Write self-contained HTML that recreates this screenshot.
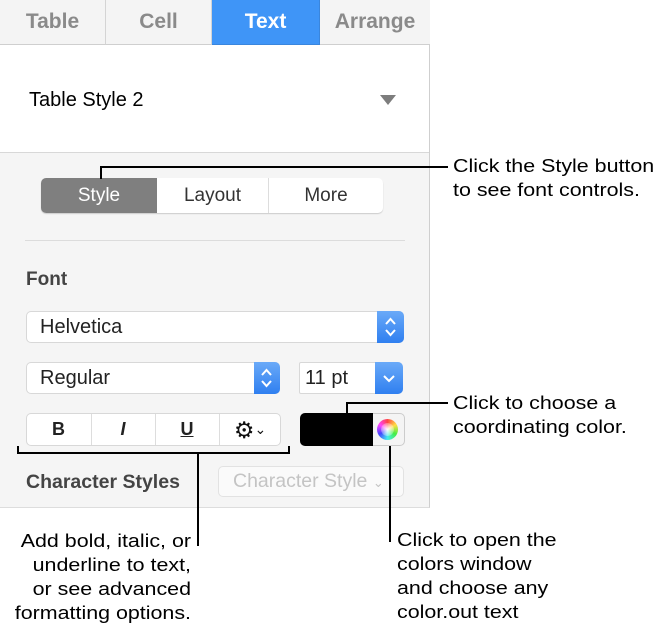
<!DOCTYPE html>
<html><head><style>
*{margin:0;padding:0;box-sizing:border-box}
body{width:662px;height:634px;background:#fff;position:relative;overflow:hidden;font-family:"Liberation Sans",Helvetica,sans-serif}
.a{position:absolute}
.panel{left:0;top:0;width:430px;height:508px;background:#f5f5f5;border-right:1px solid #cfcfcf;border-bottom:1px solid #ddd}
.tab{top:0;height:45px;border-right:1px solid #d4d4d4;border-bottom:1px solid #cfcfcf;color:#8a8a8a;font-weight:bold;font-size:21px;text-align:center;line-height:44px;background:#f4f4f4}
.ctl{background:#fff;border:1px solid #d8d8d8;border-radius:5px;font-size:20px;color:#222}
.blue{background:linear-gradient(#6aaaf8,#2f7ff0);border-radius:0 5px 5px 0}
.cap{font-size:18px;color:#000;line-height:24px;transform:scaleX(1.19);white-space:nowrap}
.ln{background:#000}
</style></head><body>
<div class="a panel"></div>
<div class="a tab" style="left:0;width:106px">Table</div>
<div class="a tab" style="left:106px;width:106px">Cell</div>
<div class="a tab" style="left:212px;width:108px;background:#3f95f7;color:#fff;border-color:#3a86dd">Text</div>
<div class="a tab" style="left:320px;width:110px;border-right:none">Arrange</div>
<div class="a" style="left:0;top:45px;width:429px;height:108px;background:#fff;border-bottom:1px solid #d8d8d8"></div>
<div class="a" style="left:29px;top:89px;font-size:20px;color:#000">Table Style 2</div>
<div class="a" style="left:380px;top:95px;width:0;height:0;border-left:8px solid transparent;border-right:8px solid transparent;border-top:10px solid #7d7d7d"></div>

<div class="a ctl" style="left:41px;top:178px;width:342px;height:35px;border:none;box-shadow:0 1px 1px #ccc"></div>
<div class="a" style="left:41px;top:178px;width:116px;height:35px;background:#7f7f7f;border-radius:5px 0 0 5px;color:#fff;font-size:19px;text-align:center;line-height:35px">Style</div>
<div class="a" style="left:157px;top:178px;width:112px;height:35px;color:#333;font-size:19px;text-align:center;line-height:35px;border-right:1px solid #ddd">Layout</div>
<div class="a" style="left:269px;top:178px;width:114px;height:35px;color:#333;font-size:19px;text-align:center;line-height:35px">More</div>
<div class="a" style="left:25px;top:240px;width:380px;height:1px;background:#dcdcdc"></div>

<div class="a" style="left:26px;top:269px;font-size:19px;font-weight:bold;color:#444">Font</div>
<div class="a ctl" style="left:26px;top:311px;width:378px;height:32px;padding:4px 0 0 13px">Helvetica</div>
<div class="a blue" style="left:377px;top:311px;width:27px;height:32px"><svg width="27" height="32"><path d="M9 13l4.5-5 4.5 5M9 19l4.5 5 4.5-5" stroke="#fff" stroke-width="2" fill="none"/></svg></div>
<div class="a ctl" style="left:26px;top:362px;width:254px;height:32px;padding:4px 0 0 13px">Regular</div>
<div class="a blue" style="left:254px;top:362px;width:26px;height:32px"><svg width="26" height="32"><path d="M8 13l4.5-5 4.5 5M8 19l4.5 5 4.5-5" stroke="#fff" stroke-width="2" fill="none"/></svg></div>
<div class="a ctl" style="left:299px;top:362px;width:104px;height:32px;padding:4px 0 0 5px;border-radius:2px 5px 5px 2px">11 pt</div>
<div class="a blue" style="left:375px;top:362px;width:28px;height:32px"><svg width="28" height="32"><path d="M9 14l5 5 5-5" stroke="#fff" stroke-width="2" fill="none"/></svg></div>

<div class="a ctl" style="left:26px;top:413px;width:255px;height:33px"></div>
<div class="a" style="left:91px;top:414px;width:1px;height:31px;background:#ddd"></div>
<div class="a" style="left:155px;top:414px;width:1px;height:31px;background:#ddd"></div>
<div class="a" style="left:219px;top:414px;width:1px;height:31px;background:#ddd"></div>
<div class="a" style="left:26px;top:419px;width:65px;text-align:center;font-weight:bold;font-size:18px;color:#222">B</div>
<div class="a" style="left:91px;top:419px;width:64px;text-align:center;font-weight:bold;font-style:italic;font-size:18px;color:#222">I</div>
<div class="a" style="left:155px;top:419px;width:64px;text-align:center;font-weight:bold;text-decoration:underline;font-size:18px;color:#222">U</div>
<div class="a" style="left:219px;top:414px;width:62px;text-align:center;font-size:23px;color:#111;line-height:30px">&#9881;<span style="font-size:14px;vertical-align:4px">&#8964;</span></div>

<div class="a" style="left:300px;top:413px;width:105px;height:33px;border:1px solid #ccc;border-radius:5px;background:#f4f4f4"></div>
<div class="a" style="left:300px;top:413px;width:73px;height:33px;background:#000;border-radius:5px 0 0 5px"></div>
<div class="a" style="left:377px;top:419px;width:21px;height:21px;border-radius:50%;background:conic-gradient(#f44,#fd4,#4e4,#4ee,#44f,#f4f,#f44)"><div style="margin:4px;width:13px;height:13px;border-radius:50%;background:radial-gradient(#fff,rgba(255,255,255,0))"></div></div>

<div class="a" style="left:26px;top:471px;font-size:19.5px;font-weight:bold;color:#444">Character Styles</div>
<div class="a" style="left:218px;top:466px;width:186px;height:31px;border:1px solid #e2e2e2;border-radius:5px;background:#fafafa;color:#c4c4c4;font-size:19.5px;padding:3px 0 0 14px;white-space:nowrap;overflow:hidden">Character Style <span style="font-size:13px">&#8964;</span></div>

<div class="a ln" style="left:100px;top:166px;width:348px;height:2px"></div>
<div class="a ln" style="left:100px;top:166px;width:2px;height:13px"></div>
<div class="a ln" style="left:346px;top:402px;width:102px;height:2px"></div>
<div class="a ln" style="left:346px;top:402px;width:2px;height:12px"></div>
<div class="a ln" style="left:17px;top:452px;width:273px;height:2px"></div>
<div class="a ln" style="left:17px;top:446px;width:2px;height:8px"></div>
<div class="a ln" style="left:288px;top:446px;width:2px;height:8px"></div>
<div class="a ln" style="left:197px;top:452px;width:2px;height:94px"></div>
<div class="a ln" style="left:389px;top:446px;width:2px;height:96px"></div>

<div class="a cap" style="left:453px;top:154px;transform-origin:0 0">Click the Style button<br>to see font controls.</div>
<div class="a cap" style="left:453px;top:391px;transform-origin:0 0">Click to choose a<br>coordinating color.</div>
<div class="a cap" style="left:397px;top:528px;transform-origin:0 0">Click to open the<br>colors window<br>and choose any<br>color.out text</div>
<div class="a cap" style="left:0;width:191px;top:529px;text-align:right;transform-origin:100% 0">Add bold, italic, or<br>underline to text,<br>or see advanced<br>formatting options.</div>
</body></html>
